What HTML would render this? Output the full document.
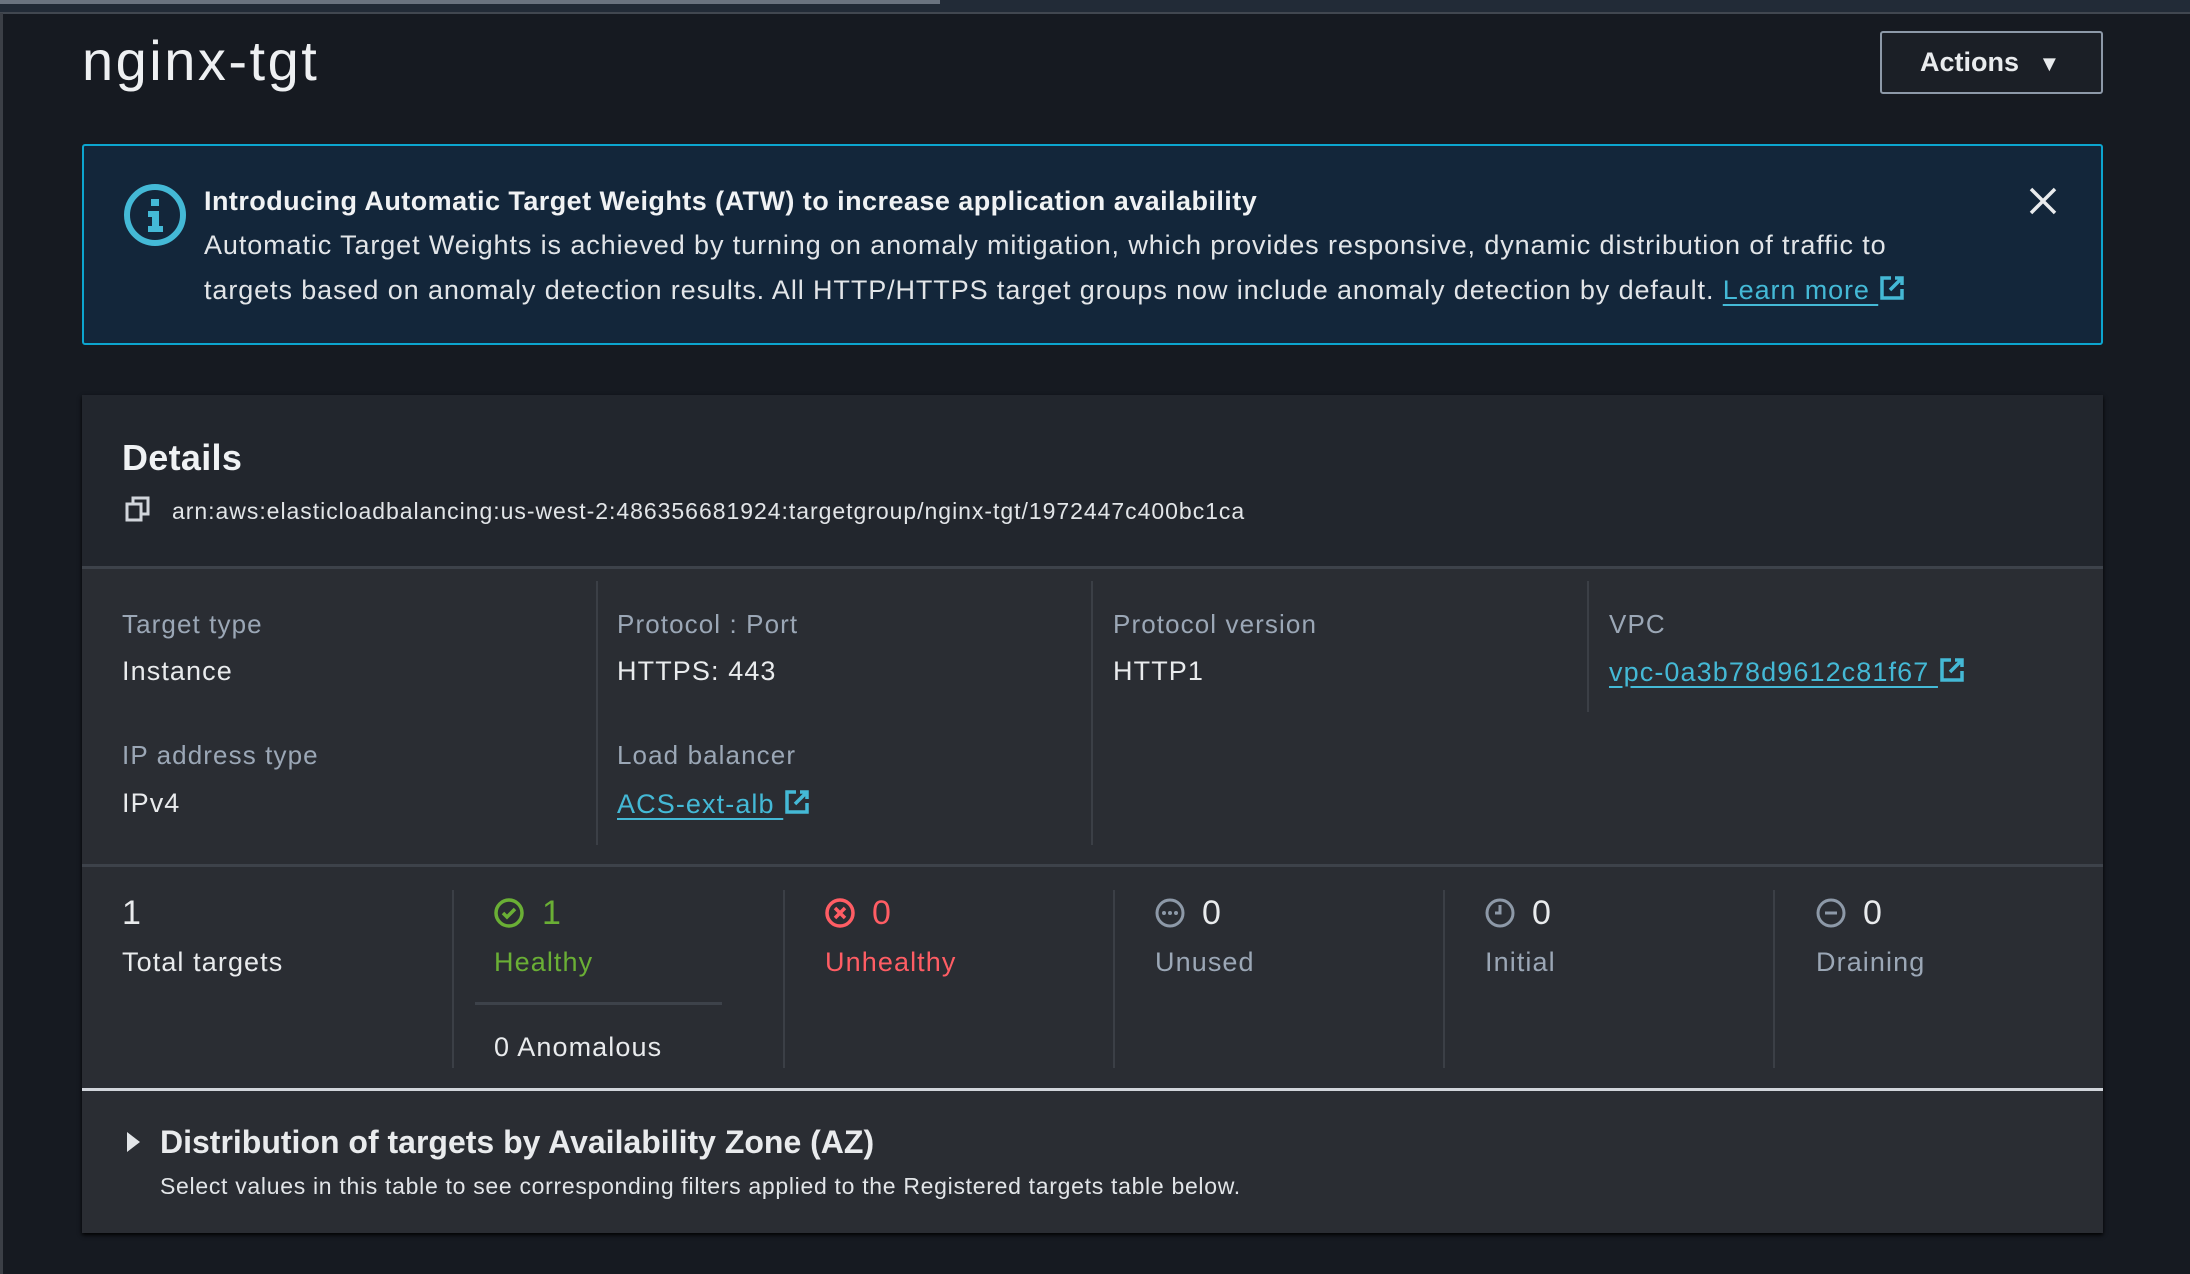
<!DOCTYPE html>
<html><head><meta charset="utf-8"><style>
*{margin:0;padding:0;box-sizing:border-box}
body{width:2190px;height:1274px;background:#161a21;font-family:"Liberation Sans",sans-serif;color:#d1d5db;position:relative;overflow:hidden}
.a{position:absolute;white-space:nowrap}
.lbl{color:#9ba7b6;font-size:26px;letter-spacing:1.1px}
.val{color:#e9ebed;font-size:27px;letter-spacing:1.1px}
.link{color:#44b9d6;text-decoration:underline;text-underline-offset:5px}
.vl{position:absolute;width:2px;background:#3b3f46}
.num{font-size:34px}
</style></head><body>
<div class="a" style="left:0;top:0;width:2190px;height:13px;background:#222b37"></div>
<div class="a" style="left:0;top:0;width:940px;height:4px;background:#6b7480"></div>
<div class="a" style="left:0;top:12px;width:2190px;height:2px;background:#414750"></div>
<div class="a" style="left:0;top:13px;width:3px;height:1261px;background:#3b3f46"></div>

<div class="a" style="left:82px;top:28px;font-size:56px;color:#eef0f2;letter-spacing:2.5px">nginx-tgt</div>
<div class="a" style="left:1880px;top:31px;width:223px;height:63px;border:2px solid #8d99a8;border-radius:3px;background:#1b1f26;font-weight:bold;font-size:27px;color:#e9ebed;line-height:59px;padding-left:38px">Actions <span style="font-size:22px;margin-left:12px">▼</span></div>

<div class="a" style="left:82px;top:144px;width:2021px;height:201px;border:2px solid #0ca5cf;border-radius:3px;background:#13263a"></div>
<svg class="a" style="left:122px;top:182px" width="66" height="66" viewBox="0 0 66 66"><circle cx="33" cy="33" r="28" fill="none" stroke="#44b9d6" stroke-width="6"/><rect x="29" y="17" width="8" height="7" fill="#44b9d6"/><path d="M26 29h11v15h4v6H26v-6h4v-9h-4z" fill="#44b9d6"/></svg>
<div class="a" style="left:204px;top:186px;font-size:27px;font-weight:bold;color:#f0f2f4;letter-spacing:0.45px">Introducing Automatic Target Weights (ATW) to increase application availability</div>
<div class="a" style="left:204px;top:230px;font-size:27px;color:#e2e5e8;letter-spacing:0.9px">Automatic Target Weights is achieved by turning on anomaly mitigation, which provides responsive, dynamic distribution of traffic to</div>
<div class="a" style="left:204px;top:274px;font-size:27px;color:#e2e5e8;letter-spacing:0.9px">targets based on anomaly detection results. All HTTP/HTTPS target groups now include anomaly detection by default. <span class="link">Learn more </span><svg width="28" height="28" viewBox="0 0 28 28" style="vertical-align:-3px"><path d="M13 4H4v20h20v-9M17 4h7v7M24 4L12 16" fill="none" stroke="#44b9d6" stroke-width="3.5"/></svg></div>
<svg class="a" style="left:2028px;top:186px" width="30" height="30" viewBox="0 0 30 30"><path d="M3 3L27 27M27 3L3 27" stroke="#e9ebed" stroke-width="3.5"/></svg>

<div class="a" style="left:82px;top:395px;width:2021px;height:838px;background:#2a2d33;box-shadow:0 2px 4px #000"></div>
<div class="a" style="left:82px;top:395px;width:2021px;height:172px;background:#22262d"></div>
<div class="a" style="left:82px;top:566px;width:2021px;height:3px;background:#3d424a"></div>
<div class="a" style="left:122px;top:437px;font-size:36px;font-weight:bold;color:#f0f2f4;letter-spacing:0.3px">Details</div>
<svg class="a" style="left:124px;top:494px" width="30" height="30" viewBox="0 0 30 30"><rect x="3" y="10" width="14" height="16" fill="none" stroke="#d1d5db" stroke-width="3"/><path d="M9 10V4h15v16h-7" fill="none" stroke="#d1d5db" stroke-width="3"/></svg>
<div class="a" style="left:172px;top:498px;font-size:23px;color:#e2e5e8;letter-spacing:0.97px">arn:aws:elasticloadbalancing:us-west-2:486356681924:targetgroup/nginx-tgt/1972447c400bc1ca</div>

<div class="vl" style="left:596px;top:581px;height:264px"></div>
<div class="vl" style="left:1091px;top:581px;height:264px"></div>
<div class="vl" style="left:1587px;top:581px;height:131px"></div>
<div class="a lbl" style="left:122px;top:609px">Target type</div>
<div class="a val" style="left:122px;top:656px">Instance</div>
<div class="a lbl" style="left:122px;top:740px">IP address type</div>
<div class="a val" style="left:122px;top:788px">IPv4</div>
<div class="a lbl" style="left:617px;top:609px">Protocol : Port</div>
<div class="a val" style="left:617px;top:656px">HTTPS: 443</div>
<div class="a lbl" style="left:617px;top:740px">Load balancer</div>
<div class="a val" style="left:617px;top:788px"><span class="link">ACS-ext-alb </span><svg width="28" height="28" viewBox="0 0 28 28" style="vertical-align:-3px"><path d="M13 4H4v20h20v-9M17 4h7v7M24 4L12 16" fill="none" stroke="#44b9d6" stroke-width="3.5"/></svg></div>
<div class="a lbl" style="left:1113px;top:609px">Protocol version</div>
<div class="a val" style="left:1113px;top:656px">HTTP1</div>
<div class="a lbl" style="left:1609px;top:609px">VPC</div>
<div class="a val" style="left:1609px;top:656px"><span class="link">vpc-0a3b78d9612c81f67 </span><svg width="28" height="28" viewBox="0 0 28 28" style="vertical-align:-3px"><path d="M13 4H4v20h20v-9M17 4h7v7M24 4L12 16" fill="none" stroke="#44b9d6" stroke-width="3.5"/></svg></div>

<div class="a" style="left:82px;top:864px;width:2021px;height:3px;background:#3d424a"></div>
<div class="vl" style="left:452px;top:890px;height:178px"></div>
<div class="vl" style="left:783px;top:890px;height:178px"></div>
<div class="vl" style="left:1113px;top:890px;height:178px"></div>
<div class="vl" style="left:1443px;top:890px;height:178px"></div>
<div class="vl" style="left:1773px;top:890px;height:178px"></div>
<div class="a" style="left:475px;top:1002px;width:247px;height:3px;background:#3d424a"></div>

<div class="a val num" style="left:122px;top:894px">1</div>
<div class="a val" style="left:122px;top:947px">Total targets</div>
<svg class="a" style="left:493px;top:897px" width="32" height="32" viewBox="0 0 32 32"><circle cx="16" cy="16" r="13" fill="none" stroke="#6aaf35" stroke-width="3.5"/><path d="M10 16l4 4 8-8" fill="none" stroke="#6aaf35" stroke-width="3.5"/></svg>
<div class="a num" style="left:542px;top:894px;color:#6aaf35">1</div>
<div class="a val" style="left:494px;top:947px;color:#6aaf35">Healthy</div>
<div class="a val" style="left:494px;top:1032px">0 Anomalous</div>
<svg class="a" style="left:824px;top:897px" width="32" height="32" viewBox="0 0 32 32"><circle cx="16" cy="16" r="13" fill="none" stroke="#ff5d64" stroke-width="3.5"/><path d="M11 11l10 10M21 11L11 21" stroke="#ff5d64" stroke-width="3.5"/></svg>
<div class="a num" style="left:872px;top:894px;color:#ff5d64">0</div>
<div class="a val" style="left:825px;top:947px;color:#ff5d64">Unhealthy</div>
<svg class="a" style="left:1154px;top:897px" width="32" height="32" viewBox="0 0 32 32"><circle cx="16" cy="16" r="13" fill="none" stroke="#8d99a8" stroke-width="3"/><circle cx="10" cy="16" r="2" fill="#8d99a8"/><circle cx="16" cy="16" r="2" fill="#8d99a8"/><circle cx="22" cy="16" r="2" fill="#8d99a8"/></svg>
<div class="a val num" style="left:1202px;top:894px">0</div>
<div class="a lbl" style="left:1155px;top:947px;font-size:27px">Unused</div>
<svg class="a" style="left:1484px;top:897px" width="32" height="32" viewBox="0 0 32 32"><circle cx="16" cy="16" r="13" fill="none" stroke="#8d99a8" stroke-width="3"/><path d="M16 8v8h-5" fill="none" stroke="#8d99a8" stroke-width="3"/></svg>
<div class="a val num" style="left:1532px;top:894px">0</div>
<div class="a lbl" style="left:1485px;top:947px;font-size:27px">Initial</div>
<svg class="a" style="left:1815px;top:897px" width="32" height="32" viewBox="0 0 32 32"><circle cx="16" cy="16" r="13" fill="none" stroke="#8d99a8" stroke-width="3"/><path d="M10 16h12" stroke="#8d99a8" stroke-width="3"/></svg>
<div class="a val num" style="left:1863px;top:894px">0</div>
<div class="a lbl" style="left:1816px;top:947px;font-size:27px">Draining</div>

<div class="a" style="left:82px;top:1088px;width:2021px;height:3px;background:#d1d5db"></div>
<svg class="a" style="left:125px;top:1130px" width="18" height="24" viewBox="0 0 18 24"><path d="M2 2l13 10L2 22z" fill="#e2e5e8"/></svg>
<div class="a" style="left:160px;top:1124px;font-size:32px;font-weight:bold;color:#e9ebed;letter-spacing:0px">Distribution of targets by Availability Zone (AZ)</div>
<div class="a" style="left:160px;top:1173px;font-size:23px;color:#e2e5e8;letter-spacing:0.7px">Select values in this table to see corresponding filters applied to the Registered targets table below.</div>
</body></html>
